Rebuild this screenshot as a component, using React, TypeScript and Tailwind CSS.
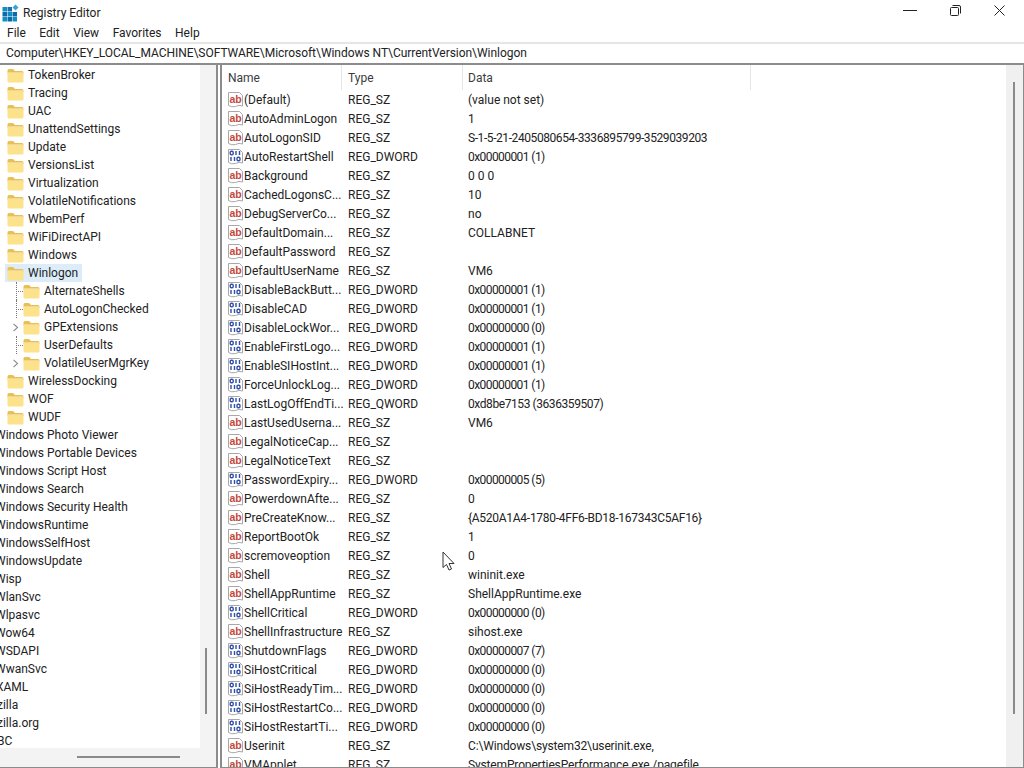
import React from 'react';

type TreeRow = { label: string; level: number; arrow?: boolean; dots?: boolean; selected?: boolean };

const treeRows: TreeRow[] = [
    { label: 'TokenBroker', level: 0 },
    { label: 'Tracing', level: 0 },
    { label: 'UAC', level: 0 },
    { label: 'UnattendSettings', level: 0 },
    { label: 'Update', level: 0 },
    { label: 'VersionsList', level: 0 },
    { label: 'Virtualization', level: 0 },
    { label: 'VolatileNotifications', level: 0 },
    { label: 'WbemPerf', level: 0 },
    { label: 'WiFiDirectAPI', level: 0 },
    { label: 'Windows', level: 0 },
    { label: 'Winlogon', level: 0, selected: true },
    { label: 'AlternateShells', level: 1, dots: true },
    { label: 'AutoLogonChecked', level: 1, dots: true },
    { label: 'GPExtensions', level: 1, arrow: true },
    { label: 'UserDefaults', level: 1, dots: true },
    { label: 'VolatileUserMgrKey', level: 1, arrow: true },
    { label: 'WirelessDocking', level: 0 },
    { label: 'WOF', level: 0 },
    { label: 'WUDF', level: 0 },
];

const outerRows = [
    'Windows Photo Viewer',
    'Windows Portable Devices',
    'Windows Script Host',
    'Windows Search',
    'Windows Security Health',
    'WindowsRuntime',
    'WindowsSelfHost',
    'WindowsUpdate',
    'Wisp',
    'WlanSvc',
    'Wlpasvc',
    'Wow64',
    'WSDAPI',
    'WwanSvc',
    'XAML',
    'zilla',
    'zilla.org',
    'BC',
];

const SZ = 'REG_SZ';
const DW = 'REG_DWORD';
const QW = 'REG_QWORD';

const values: [string, string, string][] = [
    ['(Default)', SZ, '(value not set)'],
    ['AutoAdminLogon', SZ, '1'],
    ['AutoLogonSID', SZ, 'S-1-5-21-2405080654-3336895799-3529039203'],
    ['AutoRestartShell', DW, '0x00000001 (1)'],
    ['Background', SZ, '0 0 0'],
    ['CachedLogonsC...', SZ, '10'],
    ['DebugServerCo...', SZ, 'no'],
    ['DefaultDomain...', SZ, 'COLLABNET'],
    ['DefaultPassword', SZ, ''],
    ['DefaultUserName', SZ, 'VM6'],
    ['DisableBackButt...', DW, '0x00000001 (1)'],
    ['DisableCAD', DW, '0x00000001 (1)'],
    ['DisableLockWor...', DW, '0x00000000 (0)'],
    ['EnableFirstLogo...', DW, '0x00000001 (1)'],
    ['EnableSIHostInt...', DW, '0x00000001 (1)'],
    ['ForceUnlockLog...', DW, '0x00000001 (1)'],
    ['LastLogOffEndTi...', QW, '0xd8be7153 (3636359507)'],
    ['LastUsedUserna...', SZ, 'VM6'],
    ['LegalNoticeCap...', SZ, ''],
    ['LegalNoticeText', SZ, ''],
    ['PasswordExpiry...', DW, '0x00000005 (5)'],
    ['PowerdownAfte...', SZ, '0'],
    ['PreCreateKnow...', SZ, '{A520A1A4-1780-4FF6-BD18-167343C5AF16}'],
    ['ReportBootOk', SZ, '1'],
    ['scremoveoption', SZ, '0'],
    ['Shell', SZ, 'wininit.exe'],
    ['ShellAppRuntime', SZ, 'ShellAppRuntime.exe'],
    ['ShellCritical', DW, '0x00000000 (0)'],
    ['ShellInfrastructure', SZ, 'sihost.exe'],
    ['ShutdownFlags', DW, '0x00000007 (7)'],
    ['SiHostCritical', DW, '0x00000000 (0)'],
    ['SiHostReadyTim...', DW, '0x00000000 (0)'],
    ['SiHostRestartCo...', DW, '0x00000000 (0)'],
    ['SiHostRestartTi...', DW, '0x00000000 (0)'],
    ['Userinit', SZ, 'C:\\Windows\\system32\\userinit.exe,'],
    ['VMApplet', SZ, 'SystemPropertiesPerformance.exe /pagefile'],
];

// Roboto's digits run wider than the reference font, so number-heavy cells get pulled in
const dataTracking = (data: string) => {
    if (data.startsWith('0x0')) return 'tracking-[-0.57px]';
    if (data.startsWith('0xd') || data.startsWith('S-1')) return 'tracking-[-0.42px]';
    if (data.startsWith('{')) return 'tracking-[-0.27px]';
    if (data.startsWith('C:') || data.startsWith('System')) return 'tracking-[-0.15px]';
    return '';
};

const outerOffset = (label: string) => {
    if (label.startsWith('zilla') || label === 'BC') return 'ml-[-3px]';
    if (label === 'XAML') return 'ml-[-4px]';
    return 'ml-[-5px]';
};

const FolderIcon = () => (
    <svg width="17" height="15" viewBox="0 0 17 15" className="shrink-0">
        <path d="M0.5 2.5 Q0.5 1 2 1 H6 L8 3 H15 Q16.5 3 16.5 4.5 V6 H0.5 Z" fill="#e9bf53" />
        <path d="M0.5 5.5 H16.5 V13 Q16.5 14.5 15 14.5 H2 Q0.5 14.5 0.5 13 Z" fill="#fce28a" />
        <path d="M0.5 5 H16.5" stroke="#fbf0c4" strokeWidth="1" />
    </svg>
);

const StringIcon = () => (
    <svg width="17" height="17" viewBox="0 0 17 17" className="shrink-0">
        <path d="M1.5 1.5 H12.5 L15.5 4.5 V15 Q12 13.5 8.5 15.5 Q4.5 16.5 1.5 14.5 Z" fill="#fff" stroke="#a8a8a8" />
        <text x="2.5" y="11.5" fontSize="10.5" fontWeight="700" fill="#c4483f" fontFamily="'Liberation Sans', sans-serif">ab</text>
    </svg>
);

const BinaryIcon = () => (
    <svg width="17" height="17" viewBox="0 0 17 17" className="shrink-0">
        <path d="M1.5 1.5 H12.5 L15.5 4.5 V15 Q12 13.5 8.5 15.5 Q4.5 16.5 1.5 14.5 Z" fill="#fff" stroke="#a8a8a8" />
        <g fill="none" stroke="#2f4fa8" strokeWidth="1.4">
            <rect x="3.2" y="3.2" width="3" height="3.6" rx="1.2" />
            <path d="M9 3 V7 M12.5 3 V7" />
            <path d="M4 9 V13 M7.5 9 V13" />
            <rect x="10" y="9.2" width="3" height="3.6" rx="1.2" />
        </g>
    </svg>
);

const AppIcon = () => (
    <svg width="18" height="18" viewBox="0 0 18 18" className="shrink-0">
        <g fill="#0f8fc6">
            <rect x="0.5" y="3" width="4.5" height="4.5" />
            <rect x="5.5" y="3" width="4.5" height="4.5" fill="#1d6fb2" />
            <rect x="0.5" y="8" width="4.5" height="4.5" fill="#0c6aa6" />
            <rect x="5.5" y="8" width="4.5" height="4.5" />
            <rect x="10.5" y="8" width="4.5" height="4.5" fill="#0c6aa6" />
            <rect x="0.5" y="13" width="4.5" height="4.5" />
            <rect x="5.5" y="13" width="4.5" height="4.5" fill="#0c6aa6" />
            <rect x="10.5" y="13" width="4.5" height="4.5" />
        </g>
        <path d="M13.5 0.5 L16.5 3.5 L13.5 6.5 L10.5 3.5 Z" fill="#36a3d9" />
    </svg>
);

const Chevron = () => (
    <svg width="7" height="9" viewBox="0 0 7 9" className="absolute left-[12px] top-[5px]">
        <path d="M1.5 0.8 L5.5 4.5 L1.5 8.2" fill="none" stroke="#8a8a8a" strokeWidth="1.1" />
    </svg>
);

const Tree = () => (
    <div className="relative ml-0 w-[218px] shrink-0 overflow-hidden border-r-2 border-b border-[#8c8c8c]">
        <div className="flex flex-col pt-[1px]">
            {treeRows.map(row => (
                <div key={row.label} className="relative flex h-[18px] items-center">
                    {row.arrow && <Chevron />}
                    {row.dots && (
                        <>
                            <div className="absolute left-[16px] top-0 h-full border-l border-dotted border-[#777]" />
                            <div className="absolute left-[16px] top-[9px] w-[7px] border-t border-dotted border-[#777]" />
                        </>
                    )}
                    <div
                        className={`flex h-[18px] items-center ${row.level === 1 ? 'ml-[23px]' : 'ml-[5px] pl-[2px]'} ${
                            row.selected ? 'bg-[#dcedf9]' : ''
                        }`}
                    >
                        <FolderIcon />
                        <span className="ml-[3px] pl-[1px] pr-[4px] leading-[18px]">{row.label}</span>
                    </div>
                </div>
            ))}
            {outerRows.map(label => (
                <div key={label} className="flex h-[18px] items-center whitespace-nowrap">
                    <span className={outerOffset(label)}>{label}</span>
                </div>
            ))}
        </div>
        <div className="absolute bottom-0 right-0 top-0 w-[16px] bg-[#f3f3f3]">
            <div className="absolute left-[5px] top-[583px] h-[66px] w-[2px] bg-[#8a8a8a]" />
        </div>
        <div className="absolute bottom-0 left-0 right-0 h-[19px] bg-[#f3f3f3]">
            <div className="absolute left-[77px] top-[8px] h-[2px] w-[103px] bg-[#8a8a8a]" />
        </div>
    </div>
);

const ValueList = () => (
    <div className="relative ml-[2px] min-w-0 flex-1 overflow-hidden border-l-2 border-r border-b border-[#8c8c8c]">
        <div className="flex h-[25px] items-center text-[#3c3c3c]">
            <div className="h-full w-[120px] border-r border-[#e5e5e5] pl-[6px] leading-[26px]">Name</div>
            <div className="h-full w-[121px] border-r border-[#e5e5e5] pl-[6px] leading-[26px]">Type</div>
            <div className="h-full w-[288px] border-r border-[#e5e5e5] pl-[5px] leading-[26px]">Data</div>
        </div>
        {values.map(([name, type, data]) => (
            <div key={name} className="flex h-[19px] items-center whitespace-nowrap">
                <div className="flex w-[126px] items-center pl-[5px]">
                    {type === SZ ? <StringIcon /> : <BinaryIcon />}
                    <span>{name}</span>
                </div>
                <div className="w-[120px]">{type}</div>
                <div className={dataTracking(data)}>{data}</div>
            </div>
        ))}
        <div className="absolute bottom-0 right-0 top-0 w-[17px] bg-[#f0f0f0]">
            <div className="absolute left-[7px] top-[17px] h-[632px] w-[2px] bg-[#8a8a8a]" />
        </div>
    </div>
);

export default function App() {
    return (
        <div className="relative flex h-[768px] w-[1024px] flex-col overflow-hidden bg-white text-[12px] text-[#222] font-['Roboto','Noto_Sans',sans-serif]">
            <div className="flex h-[23px] shrink-0 items-center pl-[2px] pt-[2px]">
                <AppIcon />
                <span className="ml-[3px]">Registry Editor</span>
                <div className="ml-auto flex items-center gap-[33px] pb-[5px] pr-[19px]">
                    <div className="h-px w-[14px] bg-[#222]" />
                    <svg width="11" height="11" viewBox="0 0 11 11">
                        <rect x="0.5" y="2.5" width="8" height="8" rx="1" fill="none" stroke="#222" />
                        <path d="M2.5 0.5 H9 Q10.5 0.5 10.5 2 V8.5" fill="none" stroke="#222" />
                    </svg>
                    <svg width="11" height="11" viewBox="0 0 11 11">
                        <path d="M0.5 0.5 L10.5 10.5 M10.5 0.5 L0.5 10.5" stroke="#222" />
                    </svg>
                </div>
            </div>
            <div className="flex h-[19px] shrink-0 items-center gap-[13.5px] pl-[7px]">
                {['File', 'Edit', 'View', 'Favorites', 'Help'].map(item => (
                    <span key={item}>{item}</span>
                ))}
            </div>
            <div className="flex h-[23px] shrink-0 items-center border-y-2 border-t-[#e6e6e6] border-b-[#8c8c8c] pb-[2px] pl-[6px] tracking-[-0.04px]">
                Computer\HKEY_LOCAL_MACHINE\SOFTWARE\Microsoft\Windows NT\CurrentVersion\Winlogon
            </div>
            <div className="flex min-h-0 flex-1">
                <Tree />
                <ValueList />
            </div>
            <svg width="14" height="21" viewBox="0 0 14 21" className="absolute left-[442px] top-[551px]">
                <path d="M1 1 V16.5 L4.5 13.5 L7 19 L9.5 18 L7 12.5 H12 Z" fill="#fff" stroke="#333" />
            </svg>
        </div>
    );
}
